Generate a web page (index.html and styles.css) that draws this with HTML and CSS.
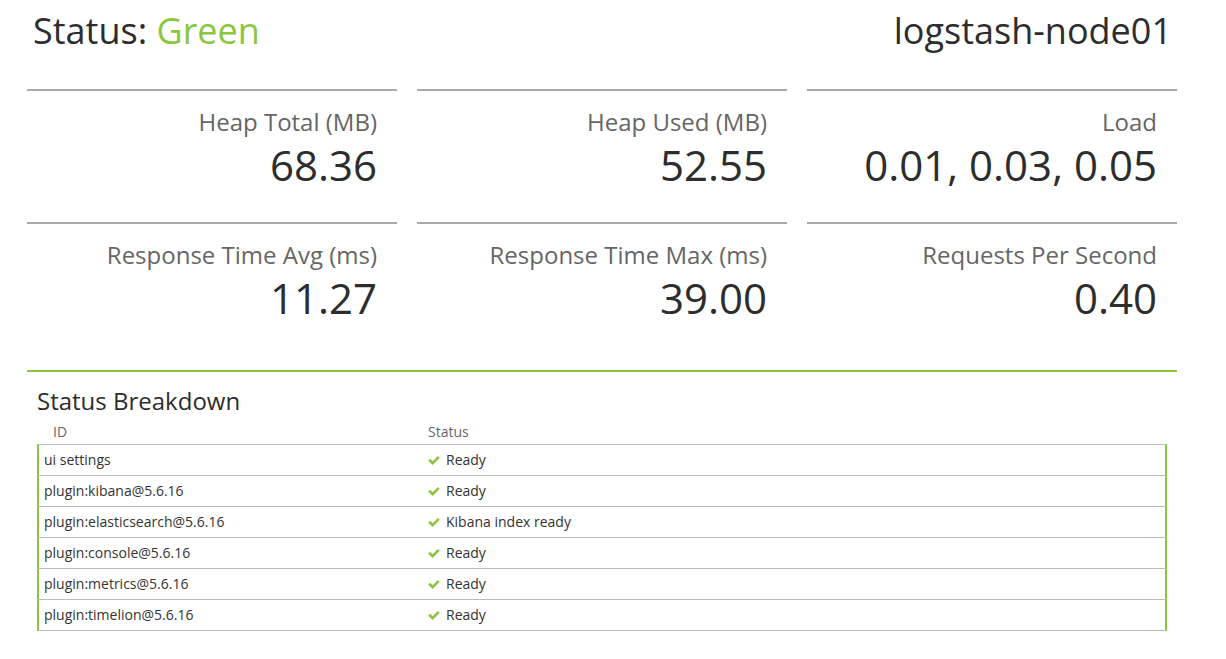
FILE: index.html
```html
<!DOCTYPE html>
<html>
<head>
<meta charset="utf-8">
<link rel="stylesheet" href="styles.css">
</head>
<body>
<div class="page">
  <header class="top">
    <h1 class="title">Status: <span class="green">Green</span></h1>
    <div class="node">logstash-node01</div>
  </header>

  <section class="metrics">
    <div class="metric"><div class="label">Heap Total (MB)</div><div class="value">68.36</div></div>
    <div class="metric"><div class="label">Heap Used (MB)</div><div class="value">52.55</div></div>
    <div class="metric"><div class="label">Load</div><div class="value">0.01, 0.03, 0.05</div></div>
    <div class="metric"><div class="label">Response Time Avg (ms)</div><div class="value">11.27</div></div>
    <div class="metric"><div class="label">Response Time Max (ms)</div><div class="value">39.00</div></div>
    <div class="metric"><div class="label">Requests Per Second</div><div class="value">0.40</div></div>
  </section>

  <section class="breakdown">
    <h2 class="bd-title">Status Breakdown</h2>
    <div class="table">
      <div class="thead">
        <div class="th th-id">ID</div>
        <div class="th th-status">Status</div>
      </div>
      <div class="row"><div class="cell id">ui settings</div><div class="cell status"><svg class="check" viewBox="0 0 12 10" width="12" height="10"><polyline points="1.2,4.8 4.6,8.1 10.8,1.9" fill="none" stroke="#8cc63f" stroke-width="2.7"/></svg>Ready</div></div>
      <div class="row"><div class="cell id">plugin:kibana@5.6.16</div><div class="cell status"><svg class="check" viewBox="0 0 12 10" width="12" height="10"><polyline points="1.2,4.8 4.6,8.1 10.8,1.9" fill="none" stroke="#8cc63f" stroke-width="2.7"/></svg>Ready</div></div>
      <div class="row"><div class="cell id">plugin:elasticsearch@5.6.16</div><div class="cell status"><svg class="check" viewBox="0 0 12 10" width="12" height="10"><polyline points="1.2,4.8 4.6,8.1 10.8,1.9" fill="none" stroke="#8cc63f" stroke-width="2.7"/></svg>Kibana index ready</div></div>
      <div class="row"><div class="cell id">plugin:console@5.6.16</div><div class="cell status"><svg class="check" viewBox="0 0 12 10" width="12" height="10"><polyline points="1.2,4.8 4.6,8.1 10.8,1.9" fill="none" stroke="#8cc63f" stroke-width="2.7"/></svg>Ready</div></div>
      <div class="row"><div class="cell id">plugin:metrics@5.6.16</div><div class="cell status"><svg class="check" viewBox="0 0 12 10" width="12" height="10"><polyline points="1.2,4.8 4.6,8.1 10.8,1.9" fill="none" stroke="#8cc63f" stroke-width="2.7"/></svg>Ready</div></div>
      <div class="row last"><div class="cell id">plugin:timelion@5.6.16</div><div class="cell status"><svg class="check" viewBox="0 0 12 10" width="12" height="10"><polyline points="1.2,4.8 4.6,8.1 10.8,1.9" fill="none" stroke="#8cc63f" stroke-width="2.7"/></svg>Ready</div></div>
    </div>
  </section>
</div>
</body>
</html>
```

FILE: styles.css
```css
* { box-sizing: border-box; }
html, body { margin: 0; padding: 0; background: #fff; }
body {
  font-family: "Open Sans", "Noto Sans", sans-serif;
  color: #2d2d2d;
}
.page {
  padding: 6px 49px 0 27px;
}
.top {
  display: flex;
  justify-content: space-between;
  align-items: baseline;
  padding: 0 5px 0 6px;
  height: 83px;
}
.title, .node {
  margin: 0;
  font-size: 36px;
  font-weight: 400;
  line-height: 49px;
  color: #2d2d2d;
}
.green { color: #8cc63f; }

.metrics {
  display: grid;
  grid-template-columns: repeat(3, 1fr);
  column-gap: 20px;
  row-gap: 20px;
}
.metric {
  border-top: 2px solid #aaaaaa;
  padding: 17px 20px 12px 0;
  text-align: right;
}
.label {
  font-size: 24px;
  line-height: 28px;
  color: #666;
}
.value {
  margin-top: 4px;
  font-size: 42px;
  line-height: 50px;
  color: #2d2d2d;
}

.breakdown {
  margin-top: 35px;
  border-top: 2px solid #8cc63f;
  padding: 13px 10px 0 10px;
}
.bd-title {
  margin: 0;
  font-size: 24px;
  font-weight: 400;
  line-height: 32px;
  color: #2d2d2d;
}
.table {
  font-size: 14px;
  line-height: 20px;
}
.thead {
  display: flex;
  padding: 5px 0 2px;
  color: #666;
}
.th-id { width: 391px; padding-left: 16px; }
.th-status { padding-left: 0; }
.row {
  display: flex;
  border-top: 1px solid #bcbcbc;
  border-left: 2px solid #8cc63f;
  border-right: 2px solid #8cc63f;
  color: #333;
}
.row.last { border-bottom: 1px solid #bcbcbc; }
.cell { padding: 5px 0; }
.id { width: 389px; padding-left: 5px; }
.status { display: flex; align-items: center; }
.check { margin-right: 6px; flex: none; }
```
